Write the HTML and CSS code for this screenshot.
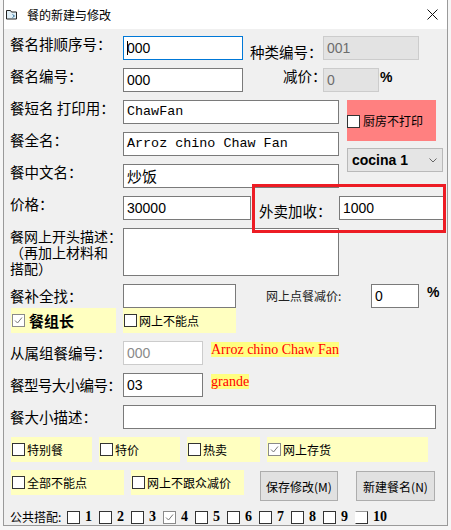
FILE: index.html
```html
<!DOCTYPE html>
<html lang="zh">
<head>
  <meta charset="UTF-8">
  <title>餐的新建与修改</title>
  <link rel="stylesheet" href="styles.css">
</head>
<body>
  <div class="ventana">
    <div class="titulo">
      <svg class="icono" width="12" height="11" viewBox="0 0 12 11">
        <path d="M0.5 1.5h4l1 1.5h5v7h-10z" fill="#dfeef6" stroke="#222"/>
        <path d="M6.5 5.5l2 1.5l-2 1.5" fill="none" stroke="#2a6f9a"/>
      </svg>
      <span class="nombre">餐的新建与修改</span>
      <svg class="cerrar" width="11" height="11" viewBox="0 0 11 11">
        <path d="M0.5 0.5L10.5 10.5M10.5 0.5L0.5 10.5" stroke="#111" stroke-width="1"/>
      </svg>
    </div>

    <div class="form">
      <div class="fila">
        <span class="lbl">餐名排顺序号：</span>
        <div class="tb foco w120"><span class="caret"></span>000</div>
        <span class="lbl2 tipo">种类编号：</span>
        <div class="tb off w96">001</div>
      </div>

      <div class="fila">
        <span class="lbl">餐名编号：</span>
        <div class="tb w120">000</div>
        <span class="lbl2 rebaja">减价：</span>
        <div class="tb off w56">0</div>
        <span class="pct">%</span>
      </div>

      <div class="bloque">
        <div class="col">
          <div class="fila">
            <span class="lbl">餐短名 打印用：</span>
            <div class="tb mono w216">ChawFan</div>
          </div>
          <div class="fila">
            <span class="lbl">餐全名：</span>
            <div class="tb mono w216">Arroz chino Chaw Fan</div>
          </div>
          <div class="fila">
            <span class="lbl">餐中文名：</span>
            <div class="tb cjk w216">炒饭</div>
          </div>
        </div>
        <div class="lado">
          <div class="rosa"><span class="cb"></span>厨房不打印</div>
          <div class="combo">
            <span>cocina 1</span>
            <svg width="8" height="5" viewBox="0 0 8 5"><path d="M0.5 0.5L4 4L7.5 0.5" fill="none" stroke="#666"/></svg>
          </div>
        </div>
      </div>

      <div class="fila precio">
        <span class="lbl">价格：</span>
        <div class="tb w128">30000</div>
        <span class="lbl2 extra">外卖加收：</span>
        <div class="tb w106">1000</div>
        <div class="marca"></div>
      </div>

      <div class="fila">
        <span class="lbl multi">餐网上开头描述：<br>（再加上材料和<br>搭配）</span>
        <div class="tb area w216"></div>
      </div>

      <div class="fila centro sin">
        <span class="lbl">餐补全找：</span>
        <div class="tb w113"></div>
        <span class="lbl-chico">网上点餐减价:</span>
        <div class="tb w48">0</div>
        <span class="pct alto">%</span>
      </div>

      <div class="fila">
        <div class="amarillo w105"><span class="cb on"><svg width="11" height="11" viewBox="0 0 11 11"><path d="M2 5.5L4.5 8L9 2.5" fill="none" stroke="#777"/></svg></span><b class="grupo">餐组长</b></div>
        <div class="amarillo w113 sep"><span class="cb"></span>网上不能点</div>
      </div>

      <div class="fila centro">
        <span class="lbl">从属组餐编号：</span>
        <div class="tb gris w80">000</div>
        <span class="etiqueta">Arroz chino Chaw Fan</span>
      </div>

      <div class="fila centro">
        <span class="lbl apretado">餐型号大小编号：</span>
        <div class="tb w80">03</div>
        <span class="etiqueta">grande</span>
      </div>

      <div class="fila centro">
        <span class="lbl">餐大小描述：</span>
        <div class="tb w313"></div>
      </div>

      <div class="fila">
        <div class="amarillo w81"><span class="cb"></span>特别餐</div>
        <div class="amarillo w81 sep"><span class="cb"></span>特价</div>
        <div class="amarillo w73 sep"><span class="cb"></span>热卖</div>
        <div class="amarillo w161 sep"><span class="cb on"><svg width="11" height="11" viewBox="0 0 11 11"><path d="M2 5.5L4.5 8L9 2.5" fill="none" stroke="#777"/></svg></span>网上存货</div>
      </div>

      <div class="fila botones">
        <div class="amarillo w113"><span class="cb"></span>全部不能点</div>
        <div class="amarillo w113 sep"><span class="cb"></span>网上不跟众减价</div>
        <button class="boton guardar">保存修改(M)</button>
        <button class="boton nuevo">新建餐名(N)</button>
      </div>

      <div class="pie">
        <span class="lbl-pie">公共搭配:</span>
        <span class="op"><span class="cb"></span><b>1</b></span>
        <span class="op"><span class="cb"></span><b>2</b></span>
        <span class="op"><span class="cb"></span><b>3</b></span>
        <span class="op"><span class="cb on"><svg width="11" height="11" viewBox="0 0 11 11"><path d="M2 5.5L4.5 8L9 2.5" fill="none" stroke="#777"/></svg></span><b>4</b></span>
        <span class="op"><span class="cb"></span><b>5</b></span>
        <span class="op"><span class="cb"></span><b>6</b></span>
        <span class="op"><span class="cb"></span><b>7</b></span>
        <span class="op"><span class="cb"></span><b>8</b></span>
        <span class="op"><span class="cb"></span><b>9</b></span>
        <span class="op"><span class="cb corte"></span><b>10</b></span>
      </div>
    </div>
  </div>
</body>
</html>
```

FILE: styles.css
```css
body {
  margin: 0;
  background: #f6f6f6;
  font-family: "Noto Sans CJK SC", sans-serif;
  color: #000;
}

.ventana {
  margin-left: 3px;
  width: 443px;
  height: 525px;
  border: 1px solid #9a9a9a;
  border-top: none;
  background: #f0f0f0;
}

.titulo {
  height: 29px;
  background: #fff;
  display: flex;
  align-items: center;
  padding-left: 2px;
}

.nombre {
  margin-left: 9px;
  font-size: 12px;
  line-height: 16px;
}

.cerrar {
  margin-left: auto;
  margin-right: 9px;
}

.form {
  padding: 7px 0 0 6px;
}

.fila {
  display: flex;
  align-items: flex-start;
  margin-bottom: 8px;
}

.fila.centro {
  align-items: center;
}

.fila.sin {
  margin-bottom: 0;
}

.lbl {
  width: 113px;
  flex: none;
  font-size: 14.5px;
  line-height: 16px;
  white-space: nowrap;
}

.lbl.multi {
  font-size: 14px;
}

.lbl.apretado {
  letter-spacing: -0.6px;
}

.lbl2 {
  flex: none;
  font-size: 14.5px;
  line-height: 16px;
  white-space: nowrap;
}

.tipo {
  width: 73px;
  margin-left: 7px;
  padding-top: 8px;
}

.rebaja {
  width: 40px;
  margin-left: 40px;
}

.extra {
  width: 80px;
  margin-left: 8px;
  padding-top: 7px;
}

.lbl-chico {
  width: 105px;
  margin-left: 30px;
  font-size: 12px;
  line-height: 16px;
  white-space: nowrap;
  color: #222;
}

.pct {
  font: bold 14px "Liberation Sans", sans-serif;
  line-height: 16px;
  margin: 1px 0 0 1px;
}

.pct.alto {
  align-self: flex-start;
  margin: 0 0 0 8px;
}

.tb {
  box-sizing: border-box;
  height: 24px;
  flex: none;
  border: 1px solid #7a7a7a;
  background: #fff;
  padding: 0 3px;
  font: 14px "Liberation Sans", sans-serif;
  line-height: 22px;
  white-space: nowrap;
  overflow: hidden;
}

.tb.foco {
  border-color: #0078d7;
}

.tb.off {
  background: #e3e3e3;
  border-color: #cccccc;
  color: #6d6d6d;
}

.tb.gris {
  border-color: #cccccc;
  color: #8a8a8a;
}

.tb.mono {
  font-family: "Liberation Mono", monospace;
  font-size: 13.4px;
}

.tb.cjk {
  font-family: "Noto Sans CJK SC", sans-serif;
  font-size: 15px;
}

.tb.area {
  height: 48px;
}

.caret {
  display: inline-block;
  width: 1px;
  height: 14px;
  background: #000;
  vertical-align: -2px;
  margin-right: -1px;
}

.w48 { width: 48px; }
.w56 { width: 56px; }
.w73 { width: 73px; }
.w80 { width: 80px; }
.w81 { width: 81px; }
.w96 { width: 96px; }
.w105 { width: 105px; }
.w106 { width: 106px; }
.w113 { width: 113px; }
.w120 { width: 120px; }
.w128 { width: 128px; }
.w161 { width: 161px; }
.w216 { width: 216px; }
.w313 { width: 313px; }

.bloque {
  display: flex;
  margin-bottom: 8px;
}

.col {
  display: flex;
  flex-direction: column;
  gap: 8px;
}

.col .fila {
  margin-bottom: 0;
}

.lado {
  margin-left: 8px;
  display: flex;
  flex-direction: column;
}

.rosa {
  width: 89px;
  height: 41px;
  background: #ff8080;
  display: flex;
  align-items: center;
  font-size: 12px;
  line-height: 16px;
}

.rosa .cb {
  margin: 1px 3px 0 0;
}

.combo {
  box-sizing: border-box;
  margin-top: 7px;
  width: 96px;
  height: 24px;
  border: 1px solid #b9b9b9;
  background: #e5e5e5;
  display: flex;
  align-items: center;
  justify-content: space-between;
  padding: 0 5px 0 4px;
  font: bold 14px "Liberation Sans", sans-serif;
}

.precio {
  position: relative;
}

.marca {
  position: absolute;
  left: 242px;
  top: -12px;
  width: 188px;
  height: 43px;
  border: 3px solid #ed1c24;
}

.amarillo {
  height: 25px;
  flex: none;
  background: #ffffc0;
  display: flex;
  align-items: center;
  font-size: 12px;
  line-height: 16px;
  margin-left: 1px;
  white-space: nowrap;
}

.amarillo.sep {
  margin-left: 7px;
}

.cb {
  box-sizing: border-box;
  width: 13px;
  height: 13px;
  flex: none;
  border: 1px solid #333;
  background: #fff;
  margin: 0 2px 0 1px;
  display: inline-flex;
}

.cb.on {
  border-color: #8a8a8a;
}

.cb.corte {
  border-left-color: transparent;
  border-top-color: #999;
}

.grupo {
  font-size: 15px;
  margin-left: 2px;
}

.etiqueta {
  align-self: flex-start;
  margin: 1px 0 0 8px;
  background: #ffff80;
  color: #ff0000;
  font: 14px "Liberation Serif", serif;
  line-height: 15px;
  white-space: nowrap;
}

.boton {
  box-sizing: border-box;
  height: 30px;
  margin-top: 1px;
  border: 1px solid #adadad;
  background: #e1e1e1;
  font-family: "Noto Sans CJK SC", sans-serif;
  font-size: 12px;
  color: #000;
  padding: 0;
}

.guardar {
  width: 78px;
  margin-left: 16px;
}

.nuevo {
  width: 79px;
  margin-left: 18px;
}

.pie {
  display: flex;
  align-items: center;
  margin-top: 1px;
  font-size: 12px;
  line-height: 16px;
}

.lbl-pie {
  width: 57px;
  flex: none;
}

.op {
  width: 32px;
  flex: none;
  display: flex;
  align-items: center;
}

.op .cb {
  margin: 0;
}

.op b {
  margin-left: 5px;
  font: bold 14px "Liberation Serif", serif;
}
```
